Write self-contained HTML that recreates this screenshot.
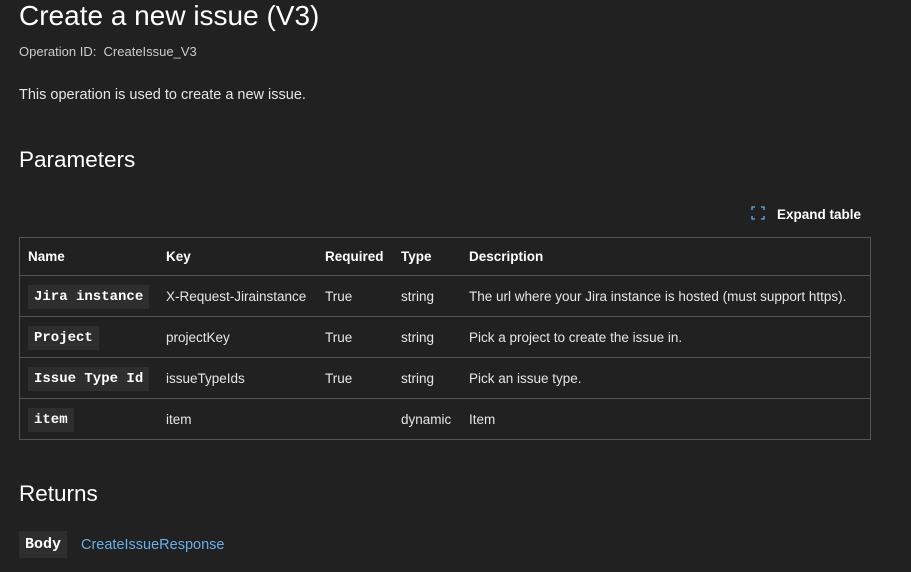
<!DOCTYPE html>
<html><head><style>
html,body{margin:0;padding:0;background:#212121;color:#e6e6e6;font-family:"Liberation Sans",sans-serif;width:911px;height:572px;overflow:hidden;position:relative}
.a{position:absolute;white-space:nowrap}
h1{position:absolute;left:19px;top:0px;margin:0;font-size:28px;font-weight:normal;color:#fff}
h2{position:absolute;left:19px;margin:0;font-size:22.5px;font-weight:normal;color:#fff}
table{position:absolute;left:19px;top:237px;width:852px;border-collapse:collapse;font-size:13.5px}
td,th{border-top:1px solid #555;border-bottom:1px solid #555;text-align:left;padding:0 0 0 8px;height:40px}
table{border:1px solid #555}
th{height:37px;font-weight:bold;color:#fff}
code{font-family:"Liberation Mono",monospace;font-weight:bold;background:#2e2e2e;color:#fff;padding:4px 6px;font-size:14px}
</style></head><body>
<h1>Create a new issue (V3)</h1>
<div class="a" style="left:19px;top:44px;font-size:13px;color:#ccc">Operation ID:&nbsp; CreateIssue_V3</div>
<div class="a" style="left:19px;top:87px;font-size:14.5px">This operation is used to create a new issue.</div>
<h2 style="top:147px">Parameters</h2>
<svg class="a" style="left:751px;top:206px" width="14" height="14" viewBox="0 0 14 14" fill="none" stroke="#6aaee6" stroke-width="1.3"><path d="M1 4V1H4M10 1H13V4M13 10V13H10M4 13H1V10"/></svg>
<div class="a" style="left:777px;top:207px;font-size:13.5px;font-weight:bold;color:#fff">Expand table</div>
<table>
<tr><th style="width:130px">Name</th><th style="width:151px">Key</th><th style="width:68px">Required</th><th style="width:60px">Type</th><th>Description</th></tr>
<tr><td><code>Jira instance</code></td><td>X-Request-Jirainstance</td><td>True</td><td>string</td><td>The url where your Jira instance is hosted (must support https).</td></tr>
<tr><td><code>Project</code></td><td>projectKey</td><td>True</td><td>string</td><td>Pick a project to create the issue in.</td></tr>
<tr><td><code>Issue Type Id</code></td><td>issueTypeIds</td><td>True</td><td>string</td><td>Pick an issue type.</td></tr>
<tr><td><code>item</code></td><td>item</td><td></td><td>dynamic</td><td>Item</td></tr>
</table>
<h2 style="top:481px">Returns</h2>
<div class="a" style="left:19px;top:535px"><code style="font-size:15px;padding:5px 6px">Body</code></div>
<div class="a" style="left:81px;top:537px;font-size:14.5px;color:#6aaee6">CreateIssueResponse</div>
</body></html>
